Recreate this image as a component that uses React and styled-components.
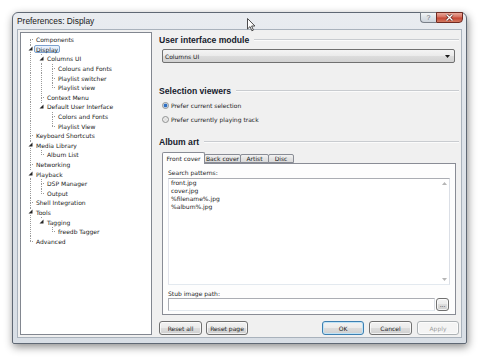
import React from 'react';
import styled, { createGlobalStyle } from 'styled-components';

const GlobalStyle = createGlobalStyle`
  html, body {
    margin: 0;
    padding: 0;
    background: #fff;
  }
  body {
    width: 480px;
    height: 357px;
    overflow: hidden;
    font-family: "DejaVu Sans", Tahoma, sans-serif;
    font-size: 6px;
    color: #1c1c1c;
  }
`;

const LINE = '#9a9a9a';
const vDots = `repeating-linear-gradient(to bottom, ${LINE} 0 1px, transparent 1px 2px)`;
const hDots = `repeating-linear-gradient(to right, ${LINE} 0 1px, transparent 1px 2px)`;

const Page = styled.div`
  padding: 12px 0 0 12px;
`;

const Window = styled.div`
  position: relative;
  width: 455px;
  height: 332px;
  box-sizing: border-box;
  border: 1px solid #5f6874;
  border-radius: 6px 6px 2px 2px;
  background: linear-gradient(to bottom, #e9ecf0, #dfe4ea 30%, #d8dee5);
  box-shadow: 1px 3px 8px rgba(0, 0, 0, 0.45);
  display: flex;
  flex-direction: column;
`;

const TitleBar = styled.div`
  height: 16px;
  flex: none;
  display: flex;
  align-items: center;
  padding-left: 4px;
`;

const Title = styled.span`
  font-family: "Liberation Sans", Arial, sans-serif;
  font-size: 8.4px;
  color: #202020;
`;

const Caption = styled.div`
  margin-left: auto;
  margin-right: 3px;
  align-self: flex-start;
  margin-top: -1px;
  display: flex;
`;

const HelpButton = styled.div`
  width: 16px;
  height: 11px;
  box-sizing: border-box;
  border: 1px solid #7a8089;
  border-right: none;
  border-radius: 0 0 0 4px;
  background: linear-gradient(to bottom, #f3f5f7, #dde2e8 50%, #cfd5dc);
  display: flex;
  align-items: center;
  justify-content: center;
  font-family: "Liberation Sans", Arial, sans-serif;
  font-size: 7px;
  color: #6a6f76;
`;

const CloseButton = styled.div`
  width: 27px;
  height: 11px;
  box-sizing: border-box;
  border: 1px solid #6f2a22;
  border-radius: 0 0 4px 0;
  background: linear-gradient(to bottom, #e9a99b, #d6705f 45%, #c54533 55%, #d27a62);
  display: flex;
  align-items: center;
  justify-content: center;
`;

const Cursor = styled.svg`
  position: absolute;
  left: 234px;
  top: 5px;
`;

const Content = styled.div`
  flex: 1;
  margin: 0 4px 5px 4px;
  border: 1px solid #a9b2bc;
  background: #f0f0f0;
  padding: 2px;
  display: flex;
  gap: 6px;
`;

/* ---------- tree ---------- */

const TreeBox = styled.div`
  width: 132px;
  flex: none;
  box-sizing: border-box;
  border: 1px solid #828790;
  background: #fff;
  padding: 2px 0 0 4px;
`;

const Row = styled.div`
  display: flex;
  height: 9.6px;
  white-space: nowrap;
`;

const Guide = styled.span`
  width: 11px;
  flex: none;
  background: ${(p) => (p.$line ? `${vDots} 5px 0 / 1px 100% no-repeat` : 'none')};
`;

const jointBg = ({ $first, $last }) => {
  const parts = [`${hDots} 5px 50% / 4px 1px no-repeat`];
  if (!$first) parts.push(`${vDots} 5px 0 / 1px 50% no-repeat`);
  if (!$last) parts.push(`${vDots} 5px 100% / 1px 50% no-repeat`);
  return parts.join(', ');
};

const Joint = styled.span`
  width: 9px;
  flex: none;
  display: flex;
  align-items: center;
  background: ${jointBg};
`;

const Expander = styled.svg`
  margin-left: 3px;
  background: #fff;
`;

const Label = styled.span`
  align-self: center;
  height: 8px;
  box-sizing: border-box;
  display: inline-flex;
  align-items: center;
  padding: 0 1px;
  border: 1px solid ${(p) => (p.$selected ? '#7da2ce' : 'transparent')};
  border-radius: 2px;
  background: ${(p) => (p.$selected ? 'linear-gradient(to bottom, #eef5fd, #d8e8fb)' : 'none')};
  color: #222;
`;

/* ---------- right side ---------- */

const Panel = styled.div`
  flex: 1;
  display: flex;
  flex-direction: column;
`;

const Header = styled.div`
  display: flex;
  align-items: center;
  height: 10px;
  margin-top: ${(p) => p.$top}px;
  margin-left: 1px;
  font-family: "Liberation Sans", Arial, sans-serif;
  font-weight: bold;
  font-size: 8.6px;
  color: #16202c;
`;

const Rule = styled.span`
  flex: 1;
  margin-left: 5px;
  border-top: 1px solid #c9ccd0;
  border-bottom: 1px solid #fbfbfb;
`;

const Combo = styled.div`
  margin: 4px 4px 0 4px;
  height: 14px;
  box-sizing: border-box;
  border: 1px solid #707070;
  border-radius: 2px;
  background: linear-gradient(to bottom, #f4f4f4, #ebebeb 49%, #dddddd 50%, #d2d2d2);
  display: flex;
  align-items: center;
  justify-content: space-between;
  padding: 0 4px 0 2px;
`;

const RadioRow = styled.div`
  display: flex;
  align-items: center;
  gap: 2px;
  height: 10px;
  margin: 4px 0 0 4px;
`;

const RadioCircle = styled.span`
  width: 7px;
  height: 7px;
  box-sizing: border-box;
  border-radius: 50%;
  border: 1px solid #8e8f8f;
  background: ${(p) =>
    p.$checked
      ? 'radial-gradient(circle, #2f6ec1 0 1.4px, #8fb8e6 1.9px, #eef2f6 2.4px)'
      : 'radial-gradient(circle, #dcdcdc, #f6f6f6)'};
`;

const TabStrip = styled.div`
  display: flex;
  align-items: flex-end;
  height: 11px;
  margin: 5px 0 0 4px;
`;

const Tab = styled.div`
  position: relative;
  width: ${(p) => p.$w}px;
  height: ${(p) => (p.$active ? 12 : 9)}px;
  margin-bottom: ${(p) => (p.$active ? -1 : 0)}px;
  margin-left: ${(p) => (p.$firstTab ? 0 : -1)}px;
  z-index: ${(p) => (p.$active ? 1 : 0)};
  box-sizing: border-box;
  border: 1px solid #898c95;
  border-bottom: ${(p) => (p.$active ? 'none' : '1px solid #898c95')};
  border-radius: 2px 2px 0 0;
  background: ${(p) => (p.$active ? '#fdfdfd' : 'linear-gradient(to bottom, #f3f3f3, #e3e3e3 50%, #dadada)')};
  display: flex;
  align-items: ${(p) => (p.$active ? 'flex-start' : 'center')};
  padding-top: ${(p) => (p.$active ? 2 : 0)}px;
  justify-content: center;
`;

const TabPanel = styled.div`
  height: 152px;
  margin: 0 3px 0 4px;
  box-sizing: border-box;
  border: 1px solid #898c95;
  background: #fdfdfd;
  padding: 5px 5px 3px 5px;
  display: flex;
  flex-direction: column;
`;

const FieldLabel = styled.div`
  line-height: 8px;
  height: 8px;
  margin-top: ${(p) => p.$top}px;
`;

const TextArea = styled.div`
  margin-top: 1px;
  height: 107px;
  box-sizing: border-box;
  border: 1px solid #abadb3;
  border-left-color: #e2e3ea;
  border-bottom-color: #e3e9ef;
  border-right-color: #dbdfe6;
  background: #fff;
  display: flex;
`;

const Lines = styled.div`
  flex: 1;
  padding: 0 2px;
  line-height: 8px;
`;

const ScrollColumn = styled.div`
  width: 9px;
  display: flex;
  flex-direction: column;
  justify-content: space-between;
  align-items: center;
  padding: 3px 0;
`;

const StubRow = styled.div`
  display: flex;
  gap: 1px;
  height: 13px;
`;

const Input = styled.div`
  width: 267px;
  box-sizing: border-box;
  border: 1px solid #abadb3;
  border-bottom-color: #e3e9ef;
  border-right-color: #dbdfe6;
  background: #fff;
`;

const Button = styled.button`
  width: ${(p) => p.$w}px;
  height: ${(p) => p.$h || 14}px;
  box-sizing: border-box;
  padding: 0;
  font-family: "DejaVu Sans", Tahoma, sans-serif;
  font-size: 6px;
  color: ${(p) => (p.$disabled ? '#9c9c9c' : '#1c1c1c')};
  border: 1px solid ${(p) => (p.$default ? '#3c7fb1' : p.$disabled ? '#adb2b5' : '#707070')};
  border-radius: 3px;
  background: ${(p) =>
    p.$disabled ? '#f4f4f4' : 'linear-gradient(to bottom, #f2f2f2, #ebebeb 49%, #dddddd 50%, #cfcfcf)'};
  box-shadow: inset 0 0 0 1px ${(p) => (p.$default ? '#bfe3f7' : 'rgba(255, 255, 255, 0.7)')};
  display: flex;
  align-items: center;
  justify-content: center;
`;

const ButtonRow = styled.div`
  margin-top: auto;
  display: flex;
  gap: 4px;
  padding-left: 1px;
`;

const RightButtons = styled.div`
  margin-left: auto;
  display: flex;
  gap: 5px;
`;

/* ---------- data ---------- */

const tree = [
  { label: 'Components' },
  {
    label: 'Display',
    selected: true,
    children: [
      {
        label: 'Columns UI',
        children: [{ label: 'Colours and Fonts' }, { label: 'Playlist switcher' }, { label: 'Playlist view' }],
      },
      { label: 'Context Menu' },
      {
        label: 'Default User Interface',
        children: [{ label: 'Colors and Fonts' }, { label: 'Playlist View' }],
      },
    ],
  },
  { label: 'Keyboard Shortcuts' },
  { label: 'Media Library', children: [{ label: 'Album List' }] },
  { label: 'Networking' },
  { label: 'Playback', children: [{ label: 'DSP Manager' }, { label: 'Output' }] },
  { label: 'Shell Integration' },
  { label: 'Tools', children: [{ label: 'Tagging', children: [{ label: 'freedb Tagger' }] }] },
  { label: 'Advanced' },
];

function flatten(nodes, guides = [], out = []) {
  nodes.forEach((node, i) => {
    const last = i === nodes.length - 1;
    out.push({ ...node, guides, last, first: out.length === 0 });
    if (node.children) flatten(node.children, [...guides, !last], out);
  });
  return out;
}

const rows = flatten(tree);
const patterns = ['front.jpg', 'cover.jpg', '%filename%.jpg', '%album%.jpg'];
const tabs = [
  { label: 'Front cover', w: 43 },
  { label: 'Back cover', w: 37 },
  { label: 'Artist', w: 29 },
  { label: 'Disc', w: 26 },
];

const Triangle = ({ up }) => (
  <svg width="5" height="3" viewBox="0 0 5 3">
    <polygon points={up ? '2.5,0 5,3 0,3' : '0,0 5,0 2.5,3'} fill={up ? '#b5b5b5' : '#1a1a1a'} />
  </svg>
);

const App = () => (
  <Page>
    <GlobalStyle />
    <Window>
      <TitleBar>
        <Title>Preferences: Display</Title>
        <Caption>
          <HelpButton>?</HelpButton>
          <CloseButton>
            <svg width="9" height="7" viewBox="0 0 9 7">
              <path d="M1.5 0.5 L7.5 6.5 M7.5 0.5 L1.5 6.5" stroke="#5a1d16" strokeWidth="2.6" />
              <path d="M1.5 0.5 L7.5 6.5 M7.5 0.5 L1.5 6.5" stroke="#fff" strokeWidth="1.4" />
            </svg>
          </CloseButton>
        </Caption>
      </TitleBar>
      <Cursor width="9" height="14" viewBox="0 0 9 14">
        <path d="M0.5 0.5 L0.5 11 L3 8.6 L4.9 12.8 L6.4 12.1 L4.6 8 L7.9 8 Z" fill="#fff" stroke="#3a3a3a" strokeWidth="0.9" />
      </Cursor>
      <Content>
        <TreeBox>
          {rows.map((r, i) => (
            <Row key={i}>
              {r.guides.map((g, j) => (
                <Guide key={j} $line={g} />
              ))}
              <Joint $first={r.first} $last={r.last}>
                {r.children && (
                  <Expander width="5" height="6" viewBox="0 0 5 6">
                    <polygon points="4.5,0.5 4.5,4.5 0.5,4.5" fill="#262626" />
                  </Expander>
                )}
              </Joint>
              <Label $selected={r.selected}>{r.label}</Label>
            </Row>
          ))}
        </TreeBox>
        <Panel>
          <Header $top={3}>
            User interface module
            <Rule />
          </Header>
          <Combo>
            <span>Columns UI</span>
            <Triangle />
          </Combo>
          <Header $top={23}>
            Selection viewers
            <Rule />
          </Header>
          <RadioRow>
            <RadioCircle $checked />
            Prefer current selection
          </RadioRow>
          <RadioRow>
            <RadioCircle />
            Prefer currently playing track
          </RadioRow>
          <Header $top={13}>
            Album art
            <Rule />
          </Header>
          <TabStrip>
            {tabs.map((t, i) => (
              <Tab key={t.label} $w={t.w} $active={i === 0} $firstTab={i === 0}>
                {t.label}
              </Tab>
            ))}
          </TabStrip>
          <TabPanel>
            <FieldLabel $top={0}>Search patterns:</FieldLabel>
            <TextArea>
              <Lines>
                {patterns.map((p) => (
                  <div key={p}>{p}</div>
                ))}
              </Lines>
              <ScrollColumn>
                <Triangle up />
                <svg width="5" height="3" viewBox="0 0 5 3">
                  <polygon points="0,0 5,0 2.5,3" fill="#b5b5b5" />
                </svg>
              </ScrollColumn>
            </TextArea>
            <FieldLabel $top={5}>Stub image path:</FieldLabel>
            <StubRow>
              <Input />
              <Button $w={13} $h={13}>...</Button>
            </StubRow>
          </TabPanel>
          <ButtonRow>
            <Button $w={43}>Reset all</Button>
            <Button $w={42}>Reset page</Button>
            <RightButtons>
              <Button $w={42} $default>OK</Button>
              <Button $w={43}>Cancel</Button>
              <Button $w={42} $disabled>Apply</Button>
            </RightButtons>
          </ButtonRow>
        </Panel>
      </Content>
    </Window>
  </Page>
);

export default App;
